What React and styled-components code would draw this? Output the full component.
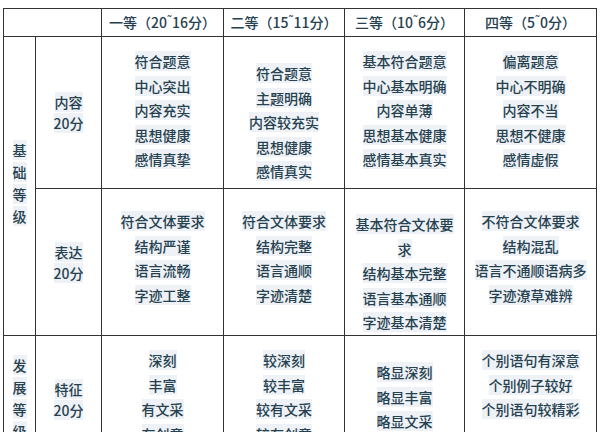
import React from "react";
import styled, { createGlobalStyle } from "styled-components";

const GlobalStyle = createGlobalStyle`
  html, body {
    margin: 0;
    padding: 0;
    background: #fff;
  }
  body {
    font-family: "Noto Sans CJK SC", "Noto Sans", sans-serif;
    overflow: hidden;
  }
`;

const Page = styled.div`
  width: 600px;
  height: 432px;
  padding: 8px 0 0 3px;
  box-sizing: border-box;
  overflow: hidden;
`;

const Table = styled.table`
  border-collapse: collapse;
  table-layout: fixed;
  width: 593px;
  color: #26414f;
  font-size: 14px;
  font-weight: 500;
`;

const HeadRow = styled.tr`
  height: 28px;
`;

const BodyRow = styled.tr`
  height: ${(p) => p.h}px;
`;

const HeadCell = styled.th`
  border: 1.5px solid #333;
  font-weight: 500;
  text-align: center;
  vertical-align: middle;
  padding: 0;
  line-height: 20px;
  white-space: nowrap;
`;

const Cell = styled.td`
  border: 1.5px solid #333;
  text-align: center;
  vertical-align: top;
  padding: ${(p) => p.pad || 0}px 6px 0;
  line-height: ${(p) => p.lh || 24.5}px;
`;

const Line = styled.div``;

// the faint blue tint behind each text line in the scan
const Mark = styled.span`
  background: rgba(205, 218, 228, 0.35);
`;

const Tilde = styled.span`
  position: relative;
  top: -4px;
  font-size: 11px;
`;

const grades = [
  ["一等", "20", "16"],
  ["二等", "15", "11"],
  ["三等", "10", "6"],
  ["四等", "5", "0"],
];

const rows = [
  {
    h: 152,
    group: { text: "基础等级", pad: 102, span: 2 },
    label: { lines: ["内容", "20分"], pad: 55 },
    cells: [
      { pad: 12, lines: ["符合题意", "中心突出", "内容充实", "思想健康", "感情真挚"] },
      { pad: 24, lines: ["符合题意", "主题明确", "内容较充实", "思想健康", "感情真实"] },
      { pad: 12, lines: ["基本符合题意", "中心基本明确", "内容单薄", "思想基本健康", "感情基本真实"] },
      { pad: 12, lines: ["偏离题意", "中心不明确", "内容不当", "思想不健康", "感情虚假"] },
    ],
  },
  {
    h: 147,
    label: { lines: ["表达", "20分"], pad: 53 },
    cells: [
      { pad: 20, lines: ["符合文体要求", "结构严谨", "语言流畅", "字迹工整"] },
      { pad: 20, lines: ["符合文体要求", "结构完整", "语言通顺", "字迹清楚"] },
      { pad: 23, lines: ["基本符合文体要求", "结构基本完整", "语言基本通顺", "字迹基本清楚"] },
      { pad: 20, lines: ["不符合文体要求", "结构混乱", "语言不通顺语病多", "字迹潦草难辨"] },
    ],
  },
  {
    h: 130,
    group: { text: "发展等级", pad: 18, span: 1 },
    label: { lines: ["特征", "20分"], pad: 43 },
    cells: [
      { pad: 12, lines: ["深刻", "丰富", "有文采", "有创意"] },
      { pad: 12, lines: ["较深刻", "较丰富", "较有文采", "较有创意"] },
      { pad: 24, lines: ["略显深刻", "略显丰富", "略显文采", "略显创意"] },
      { pad: 12, lines: ["个别语句有深意", "个别例子较好", "个别语句较精彩"] },
    ],
  },
];

function Lines({ lines }) {
  return lines.map((t, i) => (
    <Line key={i}>
      <Mark>{t}</Mark>
    </Line>
  ));
}

export default function App() {
  return (
    <Page>
      <GlobalStyle />
      <Table>
        <colgroup>
          <col style={{ width: 32 }} />
          <col style={{ width: 66 }} />
          <col style={{ width: 122 }} />
          <col style={{ width: 121 }} />
          <col style={{ width: 120 }} />
          <col style={{ width: 132 }} />
        </colgroup>
        <tbody>
          <HeadRow>
            <HeadCell colSpan={2} />
            {grades.map(([name, hi, lo]) => (
              <HeadCell key={name}>
                {name}（{hi}
                <Tilde>˜</Tilde>
                {lo}分）
              </HeadCell>
            ))}
          </HeadRow>
          {rows.map((row, ri) => (
            <BodyRow key={ri} h={row.h}>
              {row.group && (
                <Cell rowSpan={row.group.span} pad={row.group.pad} lh={22}>
                  <Lines lines={row.group.text.split("")} />
                </Cell>
              )}
              <Cell pad={row.label.pad} lh={21}>
                <Lines lines={row.label.lines} />
              </Cell>
              {row.cells.map((c, ci) => (
                <Cell key={ci} pad={c.pad}>
                  <Lines lines={c.lines} />
                </Cell>
              ))}
            </BodyRow>
          ))}
        </tbody>
      </Table>
    </Page>
  );
}
